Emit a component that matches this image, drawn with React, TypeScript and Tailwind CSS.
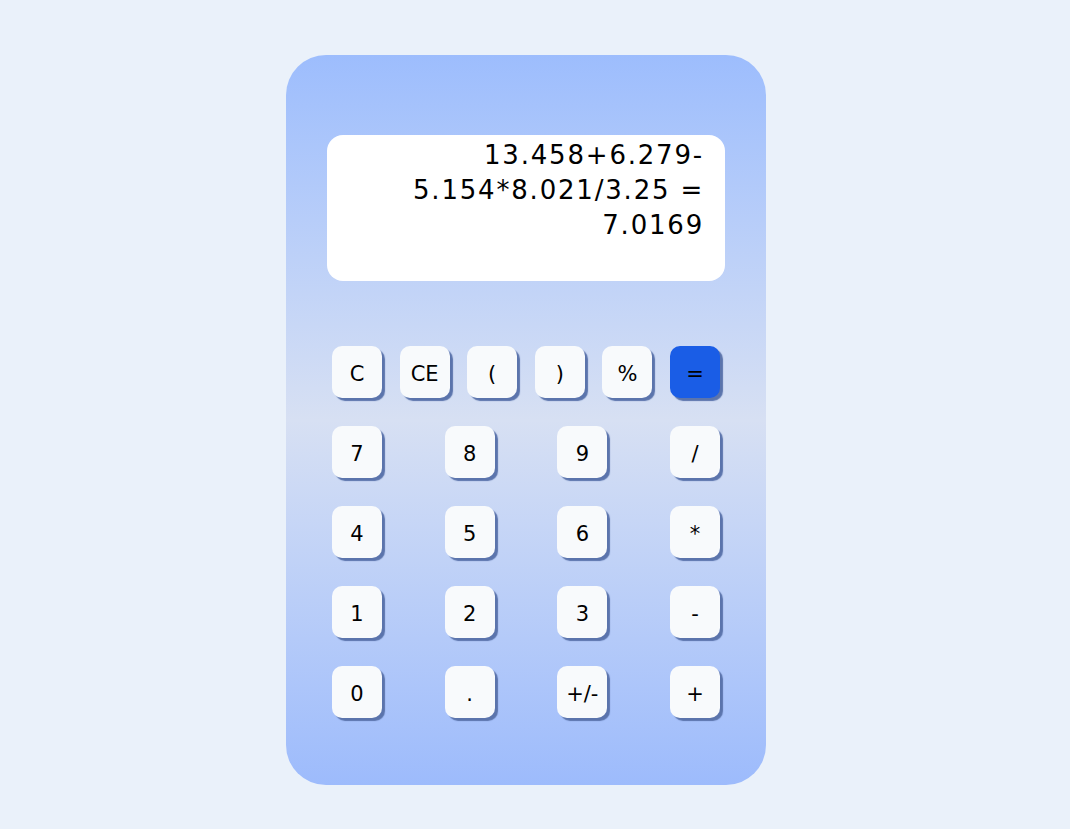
import React from 'react';

const topRow = ['C', 'CE', '(', ')', '%', '='];
const rows = [
  ['7', '8', '9', '/'],
  ['4', '5', '6', '*'],
  ['1', '2', '3', '-'],
  ['0', '.', '+/-', '+'],
];

const Key = ({ label }: { label: string }) => {
  const isEquals = label === '=';
  return (
    <button
      className={`w-[50px] h-[52px] pt-[5px] rounded-[10px] text-[21px] text-black flex items-center justify-center shadow-[3px_3px_1px_#5b74ac] ${
        isEquals ? 'bg-[#1a5de6]' : 'bg-[#f8fafc]'
      }`}
    >
      {label}
    </button>
  );
};

const App = () => {
  return (
    <div
      className="min-h-screen w-full bg-[#eaf1fa] flex justify-center pt-[55px] pr-[18px]"
      style={{ fontFamily: '"DejaVu Sans", Verdana, sans-serif' }}
    >
      <div className="w-[480px] h-[730px] rounded-[40px] bg-gradient-to-b from-[#9dbdfd] via-[#d7e0f3] to-[#9dbbfc] px-[41px] pt-[80px]">
        <div className="h-[146px] bg-white rounded-[16px] pr-[21px] pt-[3px] text-right text-[26px] leading-[35px] tracking-[1.8px] text-black">
          <div>13.458+6.279-</div>
          <div>5.154*8.021/3.25 =</div>
          <div>7.0169</div>
        </div>

        <div className="mt-[65px] px-[5px] flex flex-col gap-[28px]">
          <div className="flex justify-between">
            {topRow.map((k) => (
              <Key key={k} label={k} />
            ))}
          </div>
          {rows.map((row, i) => (
            <div key={i} className="flex justify-between">
              {row.map((k) => (
                <Key key={k} label={k} />
              ))}
            </div>
          ))}
        </div>
      </div>
    </div>
  );
};

export default App;
